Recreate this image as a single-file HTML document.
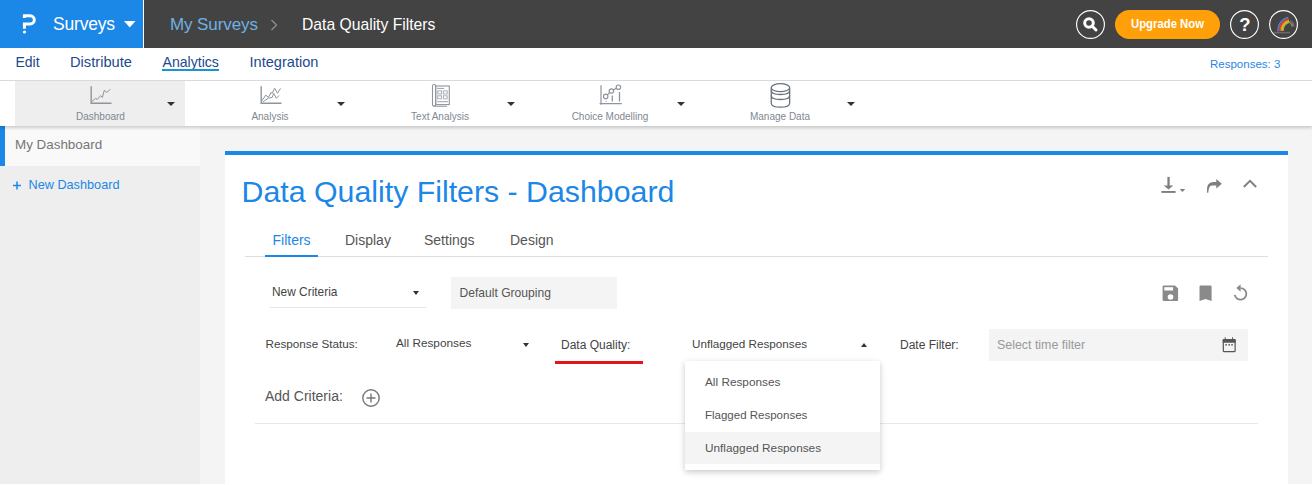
<!DOCTYPE html>
<html><head><meta charset="utf-8">
<style>
*{margin:0;padding:0;box-sizing:border-box}
html,body{width:1312px;height:485px;overflow:hidden;background:#f4f4f4;font-family:"Liberation Sans",sans-serif}
.a{position:absolute;white-space:nowrap;line-height:1}
#top{position:absolute;left:0;top:0;width:1312px;height:48px;background:#434343}
#brand{position:absolute;left:0;top:0;width:143px;height:48px;background:#1b87e6}
#nav{position:absolute;left:0;top:48px;width:1312px;height:33px;background:#fff;border-bottom:1px solid #dcdcdc}
#tool{position:absolute;left:0;top:81px;width:1312px;height:45px;background:#fff;box-shadow:0 2px 3px rgba(0,0,0,.18)}
#side{position:absolute;left:0;top:126px;width:200px;height:359px;background:#eeeeee}
#card{position:absolute;left:225px;top:151px;width:1063px;height:340px;background:#fff;border-top:4px solid #1b87e6}
.circ{position:absolute;width:29px;height:29px}
.tri{position:absolute;width:0;height:0;border-left:4px solid transparent;border-right:4px solid transparent;border-top:4.5px solid #333}
.tl{color:#808892;font-size:10px}
.t13{font-size:12px;color:#555}
</style></head><body>
<div id="top"></div>
<div id="brand"></div>
<!-- P logo -->
<div class="a" style="left:143px;top:0;width:1px;height:48px;background:#fff"></div>
<svg class="a" style="left:0;top:0" width="48" height="48" viewBox="0 0 48 48">
  <path d="M22.9 14.3 H30.2 A5.6 5.6 0 0 1 30.2 25.5 H25.9 V28.8 H22.9 V22.5 H30.2 A2.65 2.65 0 0 0 30.2 17.2 H25.9 V17.9 H22.9 Z" fill="#fff"/>
  <circle cx="24.5" cy="32" r="1.6" fill="#fff"/>
</svg>
<div class="a" style="left:53px;top:16px;font-size:17.5px;color:#fff;letter-spacing:-0.2px">Surveys</div>
<svg class="a" style="left:124px;top:21px" width="12" height="7"><path d="M0 0 L11.5 0 L5.75 6.5Z" fill="#fff"/></svg>
<div class="a" style="left:170px;top:15.5px;font-size:17px;color:#6fb1e3;letter-spacing:-0.1px">My Surveys</div>
<svg class="a" style="left:270px;top:19px" width="9" height="12"><path d="M1.5 1 L6.5 6 L1.5 11" fill="none" stroke="#8c8c8c" stroke-width="1.4"/></svg>
<div class="a" style="left:302px;top:16.5px;font-size:15.7px;color:#fff">Data Quality Filters</div>

<svg class="circ" style="left:1076px;top:10px" width="29" height="29" viewBox="0 0 29 29"><circle cx="14.5" cy="14.5" r="13.9" fill="none" stroke="#fff" stroke-width="1.15"/></svg>
<svg class="a" style="left:1082px;top:16px" width="18" height="18" viewBox="0 0 18 18"><circle cx="7" cy="7" r="4.3" fill="none" stroke="#fff" stroke-width="3"/><path d="M10 10 L14 14" stroke="#fff" stroke-width="3" stroke-linecap="round"/></svg>
<div class="a" style="left:1115px;top:10px;width:105px;height:29px;border-radius:15px;background:#ffa00a"></div>
<div class="a" style="left:1115px;top:17px;width:105px;text-align:center;font-size:13px;font-weight:bold;color:#fff;transform:scaleX(0.87)">Upgrade Now</div>
<svg class="circ" style="left:1230px;top:10px" width="29" height="29" viewBox="0 0 29 29"><circle cx="14.5" cy="14.5" r="13.9" fill="none" stroke="#fff" stroke-width="1.15"/></svg>
<div class="a" style="left:1230.5px;top:15.5px;width:29px;text-align:center;font-size:18.5px;font-weight:bold;color:#fff">?</div>
<svg class="circ" style="left:1269px;top:10px" width="29" height="29" viewBox="0 0 29 29"><circle cx="14.5" cy="14.5" r="13.9" fill="none" stroke="#fff" stroke-width="1.15"/></svg>
<svg class="a" style="left:1266px;top:8px" width="34" height="34" viewBox="1266 8 34 34"><rect x="1273.8" y="31.8" width="16" height="1.6" fill="#6a6a6a"/><path d="M1278.07 31.36 A13.00 13.00 0 0 1 1288.30 17.28" stroke="#2ba6de" stroke-width="1.15" fill="none"/><path d="M1279.12 31.25 A11.95 11.95 0 0 1 1288.52 18.31" stroke="#c2398f" stroke-width="1.15" fill="none"/><path d="M1280.16 31.14 A10.90 10.90 0 0 1 1288.73 19.34" stroke="#e8432e" stroke-width="1.15" fill="none"/><path d="M1281.20 31.03 A9.85 9.85 0 0 1 1288.95 20.37" stroke="#f7941d" stroke-width="1.15" fill="none"/><path d="M1282.25 30.92 A8.80 8.80 0 0 1 1289.17 21.39" stroke="#f4c51b" stroke-width="1.15" fill="none"/><path d="M1283.29 30.81 A7.75 7.75 0 0 1 1289.39 22.42" stroke="#8cc63f" stroke-width="1.15" fill="none"/><path d="M1290.52 19.88 A7.50 7.50 0 0 1 1294.50 26.50" stroke="#c2398f" stroke-width="0.9" fill="none" opacity="0.75"/><path d="M1290.10 20.67 A6.60 6.60 0 0 1 1293.60 26.50" stroke="#2ba6de" stroke-width="0.9" fill="none" opacity="0.75"/><path d="M1289.68 21.47 A5.70 5.70 0 0 1 1292.70 26.50" stroke="#f7941d" stroke-width="0.9" fill="none" opacity="0.75"/><path d="M1289.25 22.26 A4.80 4.80 0 0 1 1291.80 26.50" stroke="#8cc63f" stroke-width="0.9" fill="none" opacity="0.75"/></svg>

<div id="nav"></div>
<div class="a" style="left:15.5px;top:55px;font-size:14px;color:#1c4a8c">Edit</div>
<div class="a" style="left:70px;top:55px;font-size:14.7px;color:#1c4a8c">Distribute</div>
<div class="a" style="left:162.5px;top:55px;font-size:14.1px;color:#1c4a8c">Analytics</div>
<div class="a" style="left:162px;top:69px;width:57px;height:2px;background:#1a93d6"></div>
<div class="a" style="left:249.5px;top:55px;font-size:14.6px;color:#1c4a8c">Integration</div>
<div class="a" style="left:1210px;top:58.8px;font-size:11.5px;color:#2b85e3">Responses: 3</div>

<div id="side"></div>
<div class="a" style="left:0;top:126px;width:200px;height:40px;background:#f9f9f9;border-left:5px solid #1b87e6"></div>
<div class="a" style="left:15px;top:137.5px;font-size:13.4px;color:#767676">My Dashboard</div>
<svg class="a" style="left:12px;top:180px" width="10" height="10" viewBox="0 0 10 10"><path d="M1 5.5 H9 M5 1.5 V9.5" stroke="#1b87e6" stroke-width="1.5"/></svg>
<div class="a" style="left:28.5px;top:178.5px;font-size:12.7px;color:#1b87e6">New Dashboard</div>

<div id="tool"></div>
<div class="a" style="left:15px;top:81px;width:170px;height:45px;background:#eeeeee"></div>
<!-- toolbar icons -->
<svg class="a" style="left:0;top:0" width="900" height="126" viewBox="0 0 900 126">
 <g fill="none" stroke="#8e959e" stroke-width="1.4">
  <path d="M91.2 86.3 V103.2 H111.5"/>
  <path d="M261.2 86.3 V103.2 H281.5"/>
 </g>
 <g fill="none" stroke="#8e959e" stroke-width="1.0" stroke-linejoin="miter">
  <polyline points="91.4 101.8 95.7 98.3 97.3 99.4 100.5 95.7 102.4 97.5 104.3 90.3 107.0 92.5 110.2 89.2"/>
  <polyline points="261.4 101.3 265.7 95.1 268.4 97.3 271.1 92.4 272.1 93.5 274.6 88.2 277.5 93.3 280.5 88.4"/>
  <polyline points="263.0 101.8 268.4 98.1 272.1 97.5 273.8 93.5 276.4 98.3 279.1 95.4"/>
 </g>
 <!-- text analysis -->
 <g fill="none" stroke="#8e959e" stroke-width="1.1">
  <rect x="432.5" y="84.5" width="3.2" height="21.5" rx="1.6"/>
  <rect x="435.7" y="86" width="13.6" height="18.6"/>
  <path d="M433 105.5 Q433 106.3 435 106.3 H447"/>
  <path d="M437.2 88.4 H444.2" stroke-width="0.9"/>
  <path d="M437.2 101.7 H448" stroke-width="0.9"/>
 </g>
 <g fill="#8e959e" opacity="0.75">
  <rect x="437.2" y="90.4" width="4.8" height="4"/>
  <rect x="442.9" y="90.4" width="4.8" height="4"/>
  <rect x="437.2" y="95.3" width="4.8" height="4"/>
  <rect x="442.9" y="95.3" width="4.8" height="4"/>
 </g>
 <g fill="#fff">
  <rect x="438.2" y="91.4" width="2.8" height="2"/>
  <rect x="443.9" y="91.4" width="2.8" height="2"/>
  <rect x="438.2" y="96.3" width="2.8" height="2"/>
  <rect x="443.9" y="96.3" width="2.8" height="2"/>
 </g>
 <!-- choice modelling -->
 <g fill="none" stroke="#8e959e" stroke-width="1.2">
  <path d="M601 85.2 V104.8 M599.6 103.7 H621.8"/>
  <circle cx="605.7" cy="96.4" r="2.2"/>
  <circle cx="611.4" cy="91" r="2.2"/>
  <circle cx="618.4" cy="87.2" r="2.2"/>
  <path d="M607.3 94.9 L609.8 92.5 M613.3 89.9 L616.5 88.2"/>
  <path d="M612.3 95.6 V101.6 M619.5 92.1 V101.6" stroke-width="1.3"/>
 </g>
 <rect x="605.8" y="100.8" width="1" height="1" fill="#8e959e"/>
 <!-- manage data -->
 <g fill="none" stroke="#6a737d" stroke-width="1.3">
  <ellipse cx="780.45" cy="87.7" rx="9.2" ry="4"/>
  <path d="M771.25 87.7 V103.2 Q771.25 107.2 780.45 107.2 Q789.65 107.2 789.65 103.2 V87.7"/>
  <path d="M771.25 90.5 Q771.25 94.5 780.45 94.5 Q789.65 94.5 789.65 90.5 M771.25 95.5 Q771.25 99.5 780.45 99.5 Q789.65 99.5 789.65 95.5"/>
 </g>
</svg>
<div class="a tl" style="left:76px;top:112px;width:48px;text-align:center">Dashboard</div>
<div class="a tl" style="left:240px;top:112px;width:60px;text-align:center">Analysis</div>
<div class="a tl" style="left:400px;top:112px;width:80px;text-align:center">Text Analysis</div>
<div class="a tl" style="left:560px;top:112px;width:100px;text-align:center">Choice Modelling</div>
<div class="a tl" style="left:730px;top:112px;width:100px;text-align:center">Manage Data</div>
<div class="tri" style="left:167px;top:101.5px"></div>
<div class="tri" style="left:337px;top:101.5px"></div>
<div class="tri" style="left:507px;top:101.5px"></div>
<div class="tri" style="left:677px;top:101.5px"></div>
<div class="tri" style="left:847px;top:101.5px"></div>

<div id="card"></div>
<div class="a" style="left:241.6px;top:177px;font-size:30.3px;color:#1b87e6">Data Quality Filters - Dashboard</div>

<!-- card header icons -->
<svg class="a" style="left:1150px;top:170px" width="120" height="30" viewBox="1150 170 120 30">
 <g fill="#7f7f7f">
  <rect x="1167.4" y="176.9" width="2.3" height="10"/>
  <path d="M1163.7 185.6 H1173.3 L1168.5 189.6Z"/>
  <rect x="1161.4" y="191" width="14.2" height="1.9"/>
  <path d="M1179.7 189 H1185.2 L1182.45 192Z"/>
  <path d="M1216.3 179 L1221.8 183.7 L1216.3 188.6 V185.5 H1211.8 Q1208.6 185.9 1208.3 192.8 H1207.1 Q1206.6 187 1208.2 184.5 Q1209.8 182 1213 181.9 H1216.3 Z"/>
 </g>
 <path d="M1243.8 187 L1250 180.8 L1256.2 187" fill="none" stroke="#7f7f7f" stroke-width="1.9"/>
</svg>
<!-- tabs -->
<div class="a" style="left:245px;top:255.5px;width:1023px;height:1px;background:#dedede"></div>
<div class="a" style="left:265px;top:254.5px;width:53px;height:2.5px;background:#1b87e6"></div>
<div class="a" style="left:272.5px;top:233px;font-size:14px;color:#1b87e6">Filters</div>
<div class="a" style="left:345px;top:233px;font-size:14px;color:#555">Display</div>
<div class="a" style="left:424px;top:233px;font-size:14px;color:#555">Settings</div>
<div class="a" style="left:510px;top:233px;font-size:14px;color:#555">Design</div>
<!-- new criteria -->
<div class="a t13" style="left:272px;top:286.7px;font-size:11.9px;color:#444">New Criteria</div>
<div class="a" style="left:270px;top:307px;width:156px;height:1px;background:#e6e6e6"></div>
<div class="tri" style="left:412.5px;top:291px;border-left-width:3.5px;border-right-width:3.5px;border-top-width:4px"></div>
<div class="a" style="left:451px;top:277px;width:166px;height:32px;background:#f4f4f4"></div>
<div class="a t13" style="left:459.5px;top:287px;font-size:12.1px;color:#555">Default Grouping</div>
<!-- save icons -->
<svg class="a" style="left:1150px;top:278px" width="110" height="30" viewBox="1150 278 110 30">
 <path d="M1163.6 285.5 H1175 L1178.1 288.6 V300 Q1178.1 301 1177.1 301 H1163.6 Q1162.6 301 1162.6 300 V286.5 Q1162.6 285.5 1163.6 285.5Z" fill="#8a8a8a"/>
 <rect x="1164.3" y="287.2" width="8.8" height="3.3" fill="#fff"/>
 <circle cx="1170.5" cy="297" r="2.8" fill="#fff"/>
 <path d="M1200.5 285.5 H1210.6 Q1211.6 285.5 1211.6 286.5 V301 L1205.55 298.9 L1199.5 301 V286.5 Q1199.5 285.5 1200.5 285.5Z" fill="#8a8a8a"/>
 <path d="M1240.5 288.1 A5.8 5.8 0 1 1 1234.8 294.8" fill="none" stroke="#8a8a8a" stroke-width="1.8"/>
 <path d="M1236.3 288 L1240.6 284.2 V291.8Z" fill="#8a8a8a"/>
</svg>
<!-- filter row -->
<div class="a t13" style="left:265.5px;top:337.8px;font-size:11.7px;color:#444">Response Status:</div>
<div class="a t13" style="left:396px;top:337.5px;font-size:11.8px;color:#444">All Responses</div>
<div class="tri" style="left:522.5px;top:343px;border-left-width:3.5px;border-right-width:3.5px;border-top-width:4px"></div>
<div class="a t13" style="left:561px;top:338.5px;font-size:12px;color:#444">Data Quality:</div>
<div class="a" style="left:555px;top:361px;width:88px;height:3px;background:#e3141c"></div>
<div class="a t13" style="left:692px;top:337.7px;font-size:11.7px;color:#444">Unflagged Responses</div>
<div class="a" style="left:861px;top:342.5px;width:0;height:0;border-left:3.5px solid transparent;border-right:3.5px solid transparent;border-bottom:4px solid #333"></div>
<div class="a t13" style="left:900px;top:339.3px;font-size:12px;color:#444">Date Filter:</div>
<div class="a" style="left:989px;top:329px;width:259px;height:32px;background:#f4f4f4"></div>
<div class="a t13" style="left:997px;top:338.7px;font-size:12.4px;color:#999">Select time filter</div>
<svg class="a" style="left:1215px;top:330px" width="30" height="30" viewBox="1215 330 30 30">
 <rect x="1223.3" y="339.6" width="11.8" height="12.1" rx="1" fill="none" stroke="#555" stroke-width="1.2"/>
 <rect x="1222.7" y="339" width="13" height="3.7" rx="0.8" fill="#555"/>
 <path d="M1225.2 337.3 V339.5 M1232.6 337.3 V339.5" stroke="#555" stroke-width="1"/>
 <rect x="1225.3" y="344" width="1.6" height="1.6" fill="#666"/><rect x="1228.4" y="344" width="1.6" height="1.6" fill="#666"/><rect x="1231.2" y="344" width="1.6" height="1.6" fill="#666"/>
</svg>
<!-- add criteria -->
<div class="a" style="left:265px;top:389px;font-size:14px;color:#555">Add Criteria:</div>
<svg class="a" style="left:361px;top:389px" width="20" height="20" viewBox="0 0 20 20">
  <circle cx="10" cy="9" r="8.2" fill="none" stroke="#777" stroke-width="1.4"/>
  <path d="M10 4.5 V13.5 M5.5 9 H14.5" stroke="#777" stroke-width="1.4"/>
</svg>
<div class="a" style="left:255px;top:423px;width:1003px;height:1px;background:#e8e8e8"></div>
<!-- dropdown -->
<div class="a" style="left:685px;top:361px;width:195px;height:109px;background:#fff;box-shadow:0 2px 6px rgba(0,0,0,.22)"></div>
<div class="a" style="left:685px;top:432px;width:195px;height:32px;background:#f4f4f4"></div>
<div class="a t13" style="left:705px;top:376.5px;font-size:11.8px;color:#555">All Responses</div>
<div class="a t13" style="left:705px;top:409.5px;font-size:11.5px;color:#555">Flagged Responses</div>
<div class="a t13" style="left:705px;top:442.5px;font-size:11.8px;color:#555">Unflagged Responses</div>
<div class="a" style="left:0;top:484px;width:1312px;height:1px;background:#fff"></div>
</body></html>
